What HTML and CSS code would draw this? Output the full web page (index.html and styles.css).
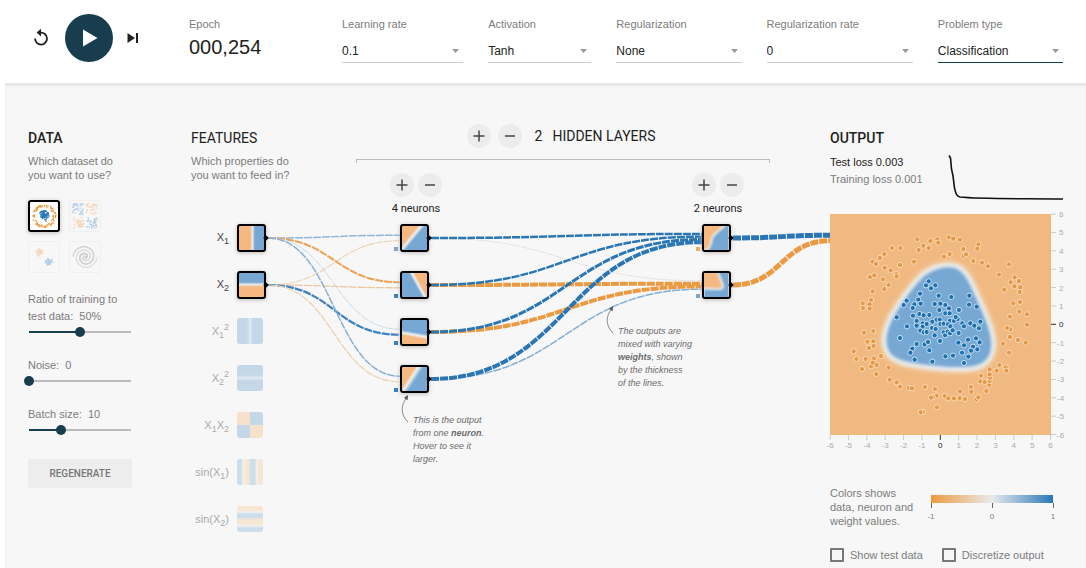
FILE: index.html
```html
<!DOCTYPE html>
<html lang="en">
<head>
  <meta charset="UTF-8" />
  <meta name="viewport" content="width=device-width, initial-scale=1.0"/>
  <title>Neural Network Playground</title>
  <link rel="stylesheet" href="styles.css">
</head>
<body>

  <!-- Top controls -->
  <header class="top-controls">
    <div class="timeline">
      <button class="icon-btn" aria-label="Reset">
        <svg width="18" height="20" viewBox="0 0 18 20">
          <path d="M8.5 4.6 A6 6 0 1 1 3 10.6" fill="none" stroke="#222" stroke-width="1.8"/>
          <path d="M9 0.8 V8.4 L4.6 4.6 Z" fill="#222"/>
        </svg>
      </button>
      <button class="play-btn" aria-label="Run">
        <svg width="48" height="48" viewBox="0 0 48 48"><path d="M18 15.5 L32.5 24 L18 32.5 Z" fill="#fff"/></svg>
      </button>
      <button class="icon-btn" aria-label="Step">
        <svg width="12" height="12" viewBox="0 0 12 12"><path d="M0.5 1 L8 6 L0.5 11 Z M9 1 H11 V11 H9 Z" fill="#222"/></svg>
      </button>
    </div>
    <div class="epoch">
      <div class="label">Epoch</div>
      <div class="epoch-value">000,254</div>
    </div>
    <div class="fields">
      <div class="field field-rate">
        <label class="label" for="learningRate">Learning rate</label>
        <select id="learningRate"><option>0.1</option><option>0.3</option></select>
      </div>
      <div class="field field-activation">
        <label class="label" for="activation">Activation</label>
        <select id="activation"><option>Tanh</option><option>ReLU</option></select>
      </div>
      <div class="field field-reg">
        <label class="label" for="regularization">Regularization</label>
        <select id="regularization"><option>None</option><option>L1</option></select>
      </div>
      <div class="field field-regrate">
        <label class="label" for="regRate">Regularization rate</label>
        <select id="regRate"><option>0</option><option>0.001</option></select>
      </div>
      <div class="field field-problem">
        <label class="label" for="problem">Problem type</label>
        <select id="problem" class="focused"><option>Classification</option><option>Regression</option></select>
      </div>
    </div>
  </header>

  <main class="main" id="main">
    <svg class="links" id="links"></svg>

    <!-- Data -->
    <section class="data">
      <h2>DATA</h2>
      <p class="hint">Which dataset do<br>you want to use?</p>
      <div class="datasets">
        <button class="dataset selected" aria-label="Circle"><svg id="dataCircle" viewBox="0 0 28 28"></svg></button>
        <button class="dataset" aria-label="Exclusive or"><svg id="dataXor" viewBox="0 0 28 28"></svg></button>
        <button class="dataset" aria-label="Gaussian"><svg id="dataGauss" viewBox="0 0 28 28"></svg></button>
        <button class="dataset" aria-label="Spiral"><svg id="dataSpiral" viewBox="0 0 28 28"></svg></button>
      </div>
      <div class="slider">
        <label for="ratio">Ratio of training to<br>test data:&nbsp; 50%</label>
        <input type="range" id="ratio" min="10" max="90" value="50" style="--fill: 50%">
      </div>
      <div class="slider">
        <label for="noise">Noise:&nbsp; 0</label>
        <input type="range" id="noise" min="0" max="50" value="0" style="--fill: 0%">
      </div>
      <div class="slider">
        <label for="batch">Batch size:&nbsp; 10</label>
        <input type="range" id="batch" min="1" max="30" value="10" style="--fill: 31%">
      </div>
      <button class="regenerate">REGENERATE</button>
    </section>

    <!-- Features -->
    <section class="features">
      <h2 class="light">FEATURES</h2>
      <p class="hint">Which properties do<br>you want to feed in?</p>
      <div class="feature-list">
        <div class="feature active"><span>X<sub>1</sub></span><div class="node x1" id="f1"></div></div>
        <div class="feature active"><span>X<sub>2</sub></span><div class="node x2" id="f2"></div></div>
        <div class="feature"><span>X<sub>1</sub><sup>2</sup></span><div class="thumb x1sq"></div></div>
        <div class="feature"><span>X<sub>2</sub><sup>2</sup></span><div class="thumb x2sq"></div></div>
        <div class="feature"><span>X<sub>1</sub>X<sub>2</sub></span><div class="thumb x1x2"></div></div>
        <div class="feature"><span>sin(X<sub>1</sub>)</span><div class="thumb sin1"></div></div>
        <div class="feature"><span>sin(X<sub>2</sub>)</span><div class="thumb sin2"></div></div>
      </div>
    </section>

    <!-- Hidden layers -->
    <section class="hidden-layers">
      <div class="layers-title">
        <button class="round-btn" aria-label="Add layer"><svg viewBox="0 0 24 24"><path d="M12 6.5 V17.5 M6.5 12 H17.5"/></svg></button>
        <button class="round-btn" aria-label="Remove layer"><svg viewBox="0 0 24 24"><path d="M7 12 H17"/></svg></button>
        <span class="layer-count">2</span>
        <h2 class="light">HIDDEN LAYERS</h2>
      </div>
      <div class="bracket"></div>
      <div class="layers">
        <div class="layer">
          <div class="layer-buttons">
            <button class="round-btn" aria-label="Add neuron"><svg viewBox="0 0 24 24"><path d="M12 6.5 V17.5 M6.5 12 H17.5"/></svg></button>
            <button class="round-btn" aria-label="Remove neuron"><svg viewBox="0 0 24 24"><path d="M7 12 H17"/></svg></button>
          </div>
          <div class="neuron-count">4 neurons</div>
          <div class="neurons">
            <div class="node n1" id="n1"><i class="bias light-blue"></i></div>
            <div class="node n2" id="n2"><i class="bias"></i></div>
            <div class="node n3" id="n3"><i class="bias"></i></div>
            <div class="node n4" id="n4"><i class="bias"></i>
              <div class="callout callout-neuron">
                <svg width="12" height="30" viewBox="0 0 12 30">
                  <path d="M8 28 C0 20 1 11 6.5 4" fill="none" stroke="#888" stroke-width="1"/>
                  <path d="M8 1 L7.6 6.2 L4 3.8 Z" fill="#555"/>
                </svg>
                <p>This is the output<br>from one <b>neuron</b>.<br>Hover to see it<br>larger.</p>
              </div>
            </div>
          </div>
        </div>
        <div class="layer">
          <div class="layer-buttons">
            <button class="round-btn" aria-label="Add neuron"><svg viewBox="0 0 24 24"><path d="M12 6.5 V17.5 M6.5 12 H17.5"/></svg></button>
            <button class="round-btn" aria-label="Remove neuron"><svg viewBox="0 0 24 24"><path d="M7 12 H17"/></svg></button>
          </div>
          <div class="neuron-count">2 neurons</div>
          <div class="neurons">
            <div class="node" id="m1"><i class="bias light-orange"></i>
              <svg viewBox="0 0 24 24">
                <rect width="24" height="24" fill="#76a8d3"/>
                <path d="M-4 -4 H22 C20 3 13 4 11 8 C6 10 8 17 5 21 C4 24 0 26 -4 28 Z" fill="#f4b880" stroke="#edf0f0" stroke-width="2" filter="url(#soft)"/>
              </svg>
            </div>
            <div class="node" id="m2"><i class="bias light-blue"></i>
              <svg viewBox="0 0 24 24">
                <rect width="24" height="24" fill="#76a8d3"/>
                <path d="M-4 -4 H12 L15 3 C17 9 20 13 18 15 C15 18 5 15 -4 16 Z" fill="#f4b880" stroke="#e6edf0" stroke-width="2" filter="url(#soft)"/>
              </svg>
            </div>
          </div>
        </div>
      </div>
      <div class="callout callout-weights">
        <svg width="12" height="30" viewBox="0 0 12 30">
          <path d="M8 28 C0 20 1 11 6.5 4" fill="none" stroke="#888" stroke-width="1"/>
          <path d="M8 1 L7.6 6.2 L4 3.8 Z" fill="#555"/>
        </svg>
        <p>The outputs are<br>mixed with varying<br><b>weights</b>, shown<br>by the thickness<br>of the lines.</p>
      </div>
    </section>

    <!-- Output -->
    <section class="output">
      <h2>OUTPUT</h2>
      <div class="loss">
        <div class="loss-text">
          <div class="test-loss">Test loss 0.003</div>
          <div>Training loss 0.001</div>
        </div>
        <svg width="120" height="48" viewBox="0 0 120 48">
          <path d="M1 1.5 L2.5 4 L3.5 15 L5 22 L6.5 34 C8 40 8.5 42.5 12 43 C30 45 60 44.5 115 45" fill="none" stroke="#111" stroke-width="1.6"/>
        </svg>
      </div>
      <svg class="heatmap" id="heatmap" viewBox="0 0 238 238">
        <defs>
          <filter id="soft" x="-20%" y="-20%" width="140%" height="140%"><feGaussianBlur stdDeviation="0.9"/></filter>
          <filter id="glow" x="-20%" y="-20%" width="140%" height="140%"><feGaussianBlur stdDeviation="2.2"/></filter>
          <filter id="edge" x="-20%" y="-20%" width="140%" height="140%"><feGaussianBlur stdDeviation="1.5"/></filter>
          <path id="boundary" d="M119 51 C131 51 137 60 142 70 C149 86 158 103 162 119 C166 137 161 150 145 154 C130 157 112 155 96 153 C82 151 69 150 60 142 C51 132 53 119 61 103 C69 89 79 74 92 61 C101 54 109 51 119 51 Z"/>
        </defs>
        <rect width="221" height="221" fill="#f0b982"/>
        <use href="#boundary" fill="none" stroke="#f4d3ae" stroke-width="8" filter="url(#glow)"/>
        <use href="#boundary" fill="#76a8d3" stroke="#e4ebec" stroke-width="4" filter="url(#edge)"/>
        <g id="points"></g>
        <g id="axes"></g>
      </svg>
      <div class="legend">
        <p class="hint">Colors shows<br>data, neuron and<br>weight values.</p>
        <div class="scale">
          <div class="scale-bar"></div>
          <div class="scale-ticks"><span>-1</span><span>0</span><span>1</span></div>
        </div>
      </div>
      <div class="checks">
        <label><input type="checkbox"> Show test data</label>
        <label><input type="checkbox"> Discretize output</label>
      </div>
    </section>
  </main>

  <script src="script.js"></script>
</body>
</html>
```
FILE: styles.css
```css
* {
  box-sizing: border-box;
}

body {
  margin: 0;
  padding-left: 5px;
  background: #fff;
  color: #7c7c7c;
  font-family: "Liberation Sans", Arial, sans-serif;
  font-size: 11px;
  line-height: 14px;
  min-height: 100vh;
  display: flex;
  flex-direction: column;
}

button {
  border: none;
  padding: 0;
  background: none;
  cursor: pointer;
}

svg {
  display: block;
}

p {
  margin: 0;
}

h2 {
  margin: 0;
  color: #222;
  font-family: Roboto, sans-serif;
  font-size: 14px;
  font-weight: 500;
  line-height: 20px;
}

h2.light {
  font-weight: 400;
}

/* Top controls */
.top-controls {
  display: flex;
  height: 83px;
  padding: 0 23px;
}

.timeline {
  display: flex;
  align-items: center;
  justify-content: space-between;
  width: 107px;
  height: 48px;
  margin: 14px 50px 0 4px;
}

.play-btn {
  width: 48px;
  height: 48px;
  border-radius: 50%;
  background: #183d4e;
}

.label {
  display: block;
}

.epoch {
  width: 153px;
  padding-top: 17px;
}

.epoch-value {
  margin-top: 4px;
  color: #222;
  font-size: 20px;
  line-height: 24px;
}

.fields {
  flex: 1;
  display: flex;
  gap: 25px;
  padding-top: 17px;
}

.field {
  min-width: 0;
}

.field-rate { flex: 121 1 0; }
.field-activation { flex: 103 1 0; }
.field-reg { flex: 125 1 0; }
.field-regrate { flex: 146 1 0; }
.field-problem { flex: 125 1 0; }

.field select {
  width: 100%;
  height: 24px;
  margin-top: 8px;
  padding: 0;
  appearance: none;
  border: none;
  border-bottom: 1px solid #ccc;
  border-radius: 0;
  background: url("data:image/svg+xml,%3Csvg xmlns='http://www.w3.org/2000/svg' width='7' height='4'%3E%3Cpath d='M0 0h7L3.5 4z' fill='%23999'/%3E%3C/svg%3E") no-repeat right 4px center;
  color: #222;
  font-family: inherit;
  font-size: 12px;
}

.field select.focused {
  border-bottom-color: #183d4e;
}

/* Main area */
.main {
  position: relative;
  flex: 1;
  display: grid;
  grid-template-columns: 104px 110px 1fr 238px;
  padding: 45px 18px 4px 23px;
  background: #f7f7f7;
  box-shadow: inset 0 3px 2px #e6e6e6;
}

.links {
  position: absolute;
  top: 0;
  left: 0;
  width: 100%;
  height: 100%;
}

.links path {
  fill: none;
  stroke-dasharray: 8 1;
}

.hint {
  margin-top: 6px;
}

/* Data column */
.datasets {
  display: grid;
  grid-template-columns: 32px 32px;
  gap: 9px;
  margin-top: 18px;
}

.dataset {
  height: 32px;
  padding: 1px;
  border: 1px solid #e4e4e4;
  border-radius: 2px;
  opacity: 0.4;
}

.dataset.selected {
  padding: 0;
  border: 2px solid #000;
  border-radius: 3px;
  background: #fff;
  box-shadow: 0 1px 4px #bbb;
  opacity: 1;
}

.slider {
  margin-top: 18px;
  line-height: 17px;
}

.slider label {
  display: block;
}

.slider input {
  display: block;
  width: calc(100% + 8px);
  height: 14px;
  margin: 0 0 0 -4px;
  appearance: none;
  background:
    linear-gradient(#183d4e, #183d4e) no-repeat 5px center / calc(var(--fill) - 5px) 2px,
    linear-gradient(#bbb, #bbb) no-repeat center / calc(100% - 10px) 2px;
}

.slider input::-webkit-slider-thumb {
  appearance: none;
  width: 10px;
  height: 10px;
  border-radius: 50%;
  background: #183d4e;
}

.regenerate {
  width: 100%;
  height: 29px;
  margin-top: 22px;
  border-radius: 2px;
  background: #ededed;
  color: #777;
  font-family: Roboto, sans-serif;
  font-size: 10px;
  font-weight: 500;
}

/* Features column */
.features {
  width: 110px;
  margin-left: 59px;
}

.feature-list {
  display: grid;
  grid-auto-rows: 28px;
  gap: 19px;
  margin-top: 42px;
}

.feature {
  display: grid;
  grid-template-columns: 38px 28px;
  gap: 8px;
  color: #aaa;
}

.feature.active {
  color: #444;
}

.feature span {
  font-size: 11px;
  line-height: 26px;
  text-align: right;
  white-space: nowrap;
}

.feature sub,
.feature sup {
  font-size: 9px;
  line-height: 0;
}

.thumb {
  width: 26px;
  height: 26px;
  border-radius: 3px;
  opacity: 0.4;
}

.node {
  position: relative;
  width: 29px;
  height: 28px;
  border: 2px solid #000;
  border-radius: 3px;
  box-shadow: 0 1px 4px #bbb;
}

.node::after {
  content: "";
  position: absolute;
  top: 10px;
  right: -4px;
  width: 4px;
  height: 4px;
  background: #000;
  transform: rotate(45deg);
}

.node > svg {
  width: 100%;
  height: 100%;
}

.x1 { background: linear-gradient(90deg, #f4b880 44%, #e8eaeb 54%, #76a8d3 64%); }
.x2 { background: linear-gradient(180deg, #76a8d3 38%, #e8eaeb 48%, #f4b880 58%); }
.x1sq { background: linear-gradient(90deg, #76a8d3 38%, #c0d5e5 50%, #76a8d3 62%); }
.x2sq { background: linear-gradient(180deg, #76a8d3 38%, #c0d5e5 50%, #76a8d3 62%); }
.x1x2 { background: conic-gradient(#76a8d3 24%, #f4c08e 26% 49%, #76a8d3 51% 74%, #f4c08e 76%); }
.sin1 { background: linear-gradient(90deg, #8ab8da 16%, #f2e8de 24%, #f8cba0 34% 44%, #8ab8da 54% 68%, #f2e8de 76%, #f8cba0 84%); }
.sin2 { background: linear-gradient(180deg, #f8cba0 16%, #f2e8de 24%, #8ab8da 30% 42%, #f8cba0 54% 68%, #f2e8de 76%, #8ab8da 84%); }
.n1 { background: linear-gradient(130deg, #f4b880 34%, #edf0f0 43%, #76a8d3 52%); }
.n2 { background: linear-gradient(61deg, #76a8d3 52%, #edf0f0 60%, #f4b880 68%); }
.n3 { background: linear-gradient(190deg, #76a8d3 50%, #edf0f0 60%, #f4b880 70%); }
.n4 { background: linear-gradient(123deg, #f4b880 32%, #edf0f0 41%, #76a8d3 54%); }

.bias {
  position: absolute;
  left: -8px;
  bottom: -1px;
  width: 4px;
  height: 4px;
  background: #3b7fbb;
}

.bias.light-blue { background: #7ba6cc; }
.bias.light-orange { background: #e5ab6b; }

/* Hidden layers */
.hidden-layers {
  position: relative;
  margin: -4px 60px 0 114px;
}

.layers-title {
  display: flex;
  align-items: center;
  justify-content: center;
  gap: 7px;
  padding-right: 4px;
}

.layer-count {
  margin: 0 3px 0 6px;
  color: #222;
  font-family: Roboto, sans-serif;
  font-size: 14px;
}

.round-btn {
  width: 24px;
  height: 24px;
  border-radius: 50%;
  background: #ececec;
}

.round-btn path {
  stroke: #444;
  stroke-width: 1.5;
}

.bracket {
  height: 4px;
  margin-top: 11px;
  border: 1px solid #bbb;
  border-bottom: none;
}

.layers {
  display: flex;
  justify-content: space-between;
  padding: 10px 26px 0 34px;
}

.layer {
  width: 52px;
}

.layer-buttons {
  display: flex;
  gap: 4px;
}

.neuron-count {
  margin-top: 5px;
  color: #222;
  font-family: Roboto, sans-serif;
  text-align: center;
}

.neurons {
  display: grid;
  gap: 19px;
  margin-top: 8px;
  padding-left: 10px;
}

/* Callouts */
.callout {
  position: absolute;
  display: flex;
  gap: 1px;
  font-size: 9px;
  font-style: italic;
  line-height: 13px;
  white-space: nowrap;
  color: #6c6c6c;
}

.callout p {
  margin-top: 20px;
}

.callout-neuron {
  top: 27px;
  left: -2px;
}

.callout-weights {
  top: 181px;
  left: 249px;
}

/* Output column */
.output {
  position: relative;
}

.loss {
  display: flex;
  justify-content: space-between;
  height: 48px;
  margin: 6px 0 12px;
  line-height: 17px;
}

.test-loss {
  color: #222;
}

.heatmap {
  width: 100%;
  overflow: visible;
}

.heatmap text {
  fill: #aaa;
  font-size: 8px;
}

.heatmap .zero {
  fill: #222;
}

.legend {
  display: flex;
  justify-content: space-between;
  margin-top: 28px;
}

.scale {
  width: 122px;
  margin: 15px 15px 0 0;
}

.scale-bar {
  height: 8px;
  background: linear-gradient(90deg, #ee9a3c, #e8eaeb, #2878b8);
}

.scale-ticks {
  display: flex;
  justify-content: space-between;
  margin: 0 -5px;
  font-size: 8px;
}

.scale-ticks span {
  width: 10px;
  text-align: center;
}

.scale-ticks span::before {
  content: "";
  display: block;
  width: 1px;
  height: 5px;
  margin: 0 auto 2px;
  background: #666;
}

.checks {
  display: flex;
  gap: 19px;
  margin-top: 20px;
}

.checks label {
  display: flex;
  align-items: center;
  gap: 6px;
  white-space: nowrap;
}

.checks input {
  width: 14px;
  height: 14px;
  margin: 0;
  appearance: none;
  border: 2px solid #777;
  border-radius: 1px;
}
```
FILE: script.js
```js
const SVG = 'http://www.w3.org/2000/svg';

function add(parent, tag, attrs, text) {
  const el = document.createElementNS(SVG, tag);
  for (const key in attrs) el.setAttribute(key, attrs[key]);
  if (text !== undefined) el.textContent = text;
  parent.appendChild(el);
  return el;
}

// from, to, slot in target, slots in target, color, width
const links = [
  ['f1', 'n1', 0, 2, '#8fb6d8', 1.5],
  ['f2', 'n1', 1, 2, '#ecd3b5', 1.2],
  ['f1', 'n2', 0, 2, '#eba356', 2],
  ['f2', 'n2', 1, 2, '#ecc79d', 1.3],
  ['f1', 'n3', 0, 2, '#c9dae6', 1],
  ['f2', 'n3', 1, 2, '#3b82bf', 2.2],
  ['f1', 'n4', 0, 2, '#86b2d6', 1.5],
  ['f2', 'n4', 1, 2, '#eccfa8', 1.2],
  ['n1', 'm2', 0, 4, '#e2e2e2', 1],
  ['n4', 'm2', 3, 4, '#82aed4', 1.5],
  ['n2', 'm2', 1, 4, '#ec9a42', 4],
  ['n3', 'm2', 2, 4, '#ec9a42', 4],
  ['n1', 'm1', 0, 4, '#2a76b5', 2.5],
  ['n2', 'm1', 1, 4, '#2a76b5', 2.5],
  ['n3', 'm1', 2, 4, '#2a76b5', 3],
  ['n4', 'm1', 3, 4, '#2a76b5', 4],
  ['m1', 'heatmap', 0, 2, '#2a76b5', 5],
  ['m2', 'heatmap', 1, 2, '#ec9a42', 5]
];

function drawLinks() {
  const svg = document.getElementById('links');
  const base = document.getElementById('main').getBoundingClientRect();
  const firstRow = document.getElementById('n1').getBoundingClientRect();
  svg.innerHTML = '';
  links.forEach(([from, to, slot, slots, color, width]) => {
    const a = document.getElementById(from).getBoundingClientRect();
    const b = document.getElementById(to).getBoundingClientRect();
    const row = to === 'heatmap' ? firstRow : b;
    const x1 = a.right - base.left + 2;
    const y1 = a.top + a.height / 2 - base.top;
    const x2 = b.left - base.left;
    const y2 = row.top + row.height / 2 - base.top + (slot - (slots - 1) / 2) / slots * 11;
    const mid = (x1 + x2) / 2;
    add(svg, 'path', {
      d: `M${x1} ${y1} C${mid} ${y1} ${mid} ${y2} ${x2} ${y2}`,
      stroke: color,
      'stroke-width': width
    });
  });
}

// Points are stored in thirds of a pixel
const orange = [
  [295,118],[334,123],[355,118],[358,128],[313,137],[329,144],[299,150],[390,112],[403,116],[423,119],[478,133],[475,146],
  [433,147],[434,168],[441,163],[392,162],[375,170],[463,183],[489,188],[507,199],[570,193],[540,224],[285,185],[219,144],
  [244,144],[196,162],[183,174],[160,185],[171,192],[197,203],[215,211],[243,195],[232,222],[233,229],[153,231],[166,226],
  [192,238],[209,255],[196,267],[161,274],[131,310],[132,324],[156,300],[152,313],[152,326],[135,398],[163,393],[145,425],
  [163,424],[150,444],[164,438],[104,454],[112,477],[140,477],[165,475],[186,468],[129,507],[156,499],[173,495],[161,488],
  [172,522],[209,503],[212,539],[233,547],[243,560],[270,564],[279,565],[318,561],[348,567],[353,587],[342,592],[336,593],
  [377,588],[388,595],[405,595],[422,594],[438,597],[423,574],[456,561],[457,575],[472,598],[478,592],[502,573],[484,544],
  [497,546],[511,554],[512,543],[513,533],[512,523],[512,508],[486,527],[533,512],[541,495],[560,502],[562,512],[354,622],
  [312,636],[305,637],[570,458],[552,431],[573,411],[597,420],[620,428],[574,388],[564,384],[573,350],[601,335],[624,343],
  [624,374],[583,310],[603,306],[556,269],[575,247],[587,232],[600,243],[586,259],[604,262],[602,276]
];
const blue = [
  [329,244],[321,256],[349,256],[336,265],[303,281],[359,287],[397,291],[451,287],[450,314],[473,320],[263,302],[254,315],
  [298,299],[286,313],[305,311],[281,324],[347,312],[364,311],[379,315],[390,325],[361,330],[420,330],[233,352],[282,347],
  [301,342],[314,346],[331,345],[379,340],[392,340],[293,363],[293,377],[311,370],[311,380],[323,372],[340,365],[353,359],
  [362,359],[364,372],[374,371],[393,362],[405,363],[416,357],[410,351],[387,373],[394,379],[430,370],[435,379],[454,370],
  [466,377],[484,365],[480,385],[264,379],[304,392],[314,397],[323,396],[339,384],[350,387],[347,406],[374,397],[378,406],
  [386,395],[393,400],[401,391],[419,399],[363,423],[243,414],[293,432],[280,446],[274,458],[317,433],[327,426],[331,451],
  [287,479],[340,485],[379,469],[402,467],[418,428],[435,436],[447,419],[471,415],[482,427],[462,440],[475,448],[456,452],
  [429,458],[448,470],[435,489]
];

function drawPoints() {
  const g = document.getElementById('points');
  const dots = (list, fill, ring) => list.forEach(([x, y]) => {
    add(g, 'circle', { cx: x / 3 - 11, cy: y / 3 - 14, r: 2.6, fill: fill, stroke: ring, 'stroke-width': 1 });
  });
  dots(orange, '#e5984a', '#fbdcb2');
  dots(blue, '#1f70b0', '#c9e2f4');
}

function drawAxes() {
  const g = document.getElementById('axes');
  for (let v = -6; v <= 6; v++) {
    const p = 110.3 + v * 18.37;
    const q = 110.3 - v * 18.37;
    const color = v === 0 ? '#333' : '#ccc';
    const cls = v === 0 ? 'zero' : '';
    add(g, 'path', { d: `M${p} 221 v5 M221 ${q} h5`, stroke: color });
    add(g, 'text', { x: p, y: 234, 'text-anchor': 'middle', class: cls }, v);
    add(g, 'text', { x: v < 0 ? 227 : 229, y: q + 3, class: cls }, v);
  }
}

// Dataset thumbnails
let seed = 7;
function random() {
  seed = (seed * 16807) % 2147483647;
  return seed / 2147483647;
}

function dot(id, x, y, fill) {
  add(document.getElementById(id), 'circle', { cx: x, cy: y, r: 0.8, fill: fill });
}

function drawDatasets() {
  for (let i = 0; i < 90; i++) {
    const a = random() * Math.PI * 2;
    const r = random() * 5.5;
    dot('dataCircle', 14 + r * Math.cos(a), 14 + r * Math.sin(a), '#2a76b5');
    const b = random() * Math.PI * 2;
    const s = 9 + random() * 2.8;
    dot('dataCircle', 14 + s * Math.cos(b), 14 + s * Math.sin(b), '#ec9a42');
  }
  for (let i = 0; i < 160; i++) {
    const x = random() * 11 + (i % 2 ? 1.5 : 15.5);
    const y = random() * 11 + (i % 4 < 2 ? 1.5 : 15.5);
    dot('dataXor', x, y, (x < 14) === (y < 14) ? '#4a90cc' : '#f0a860');
  }
  for (let i = 0; i < 50; i++) {
    const a = random() * Math.PI * 2;
    const r = random() * 3.8;
    dot('dataGauss', 9.5 + r * Math.cos(a), 9.5 + r * Math.sin(a), '#f0a860');
    dot('dataGauss', 19 + r * Math.sin(a), 19 + r * Math.cos(a), '#4a90cc');
  }
  for (let i = 0; i < 130; i++) {
    const t = i / 130;
    const a = t * Math.PI * 3.5;
    dot('dataSpiral', 14 + t * 12 * Math.sin(a), 14 + t * 12 * Math.cos(a), '#999');
    dot('dataSpiral', 14 - t * 12 * Math.sin(a), 14 - t * 12 * Math.cos(a), '#bbb');
  }
}

drawDatasets();
drawPoints();
drawAxes();
drawLinks();
window.addEventListener('resize', drawLinks);
```
